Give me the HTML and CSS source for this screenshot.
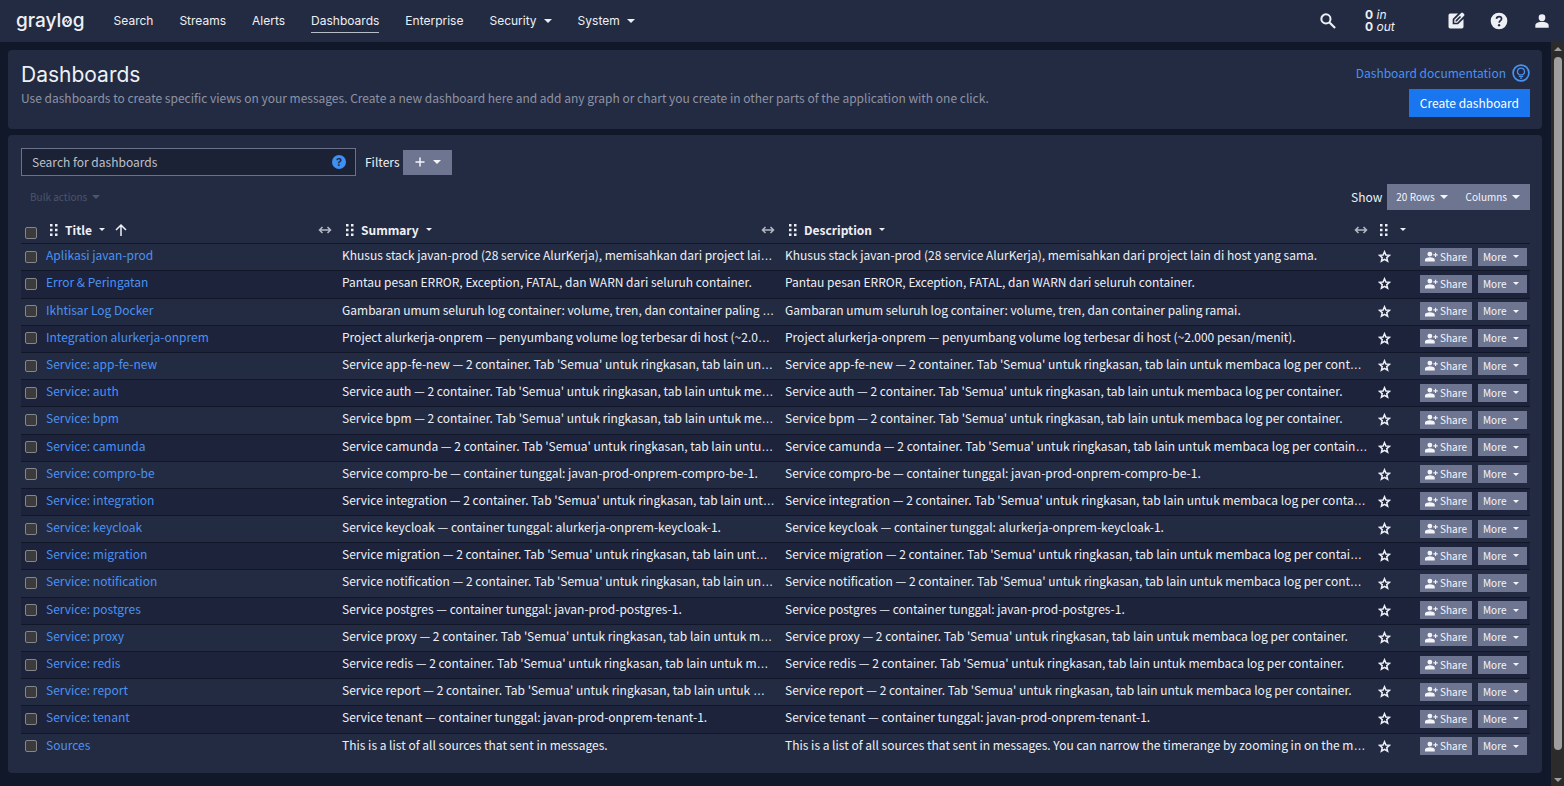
FILE: index.html
```html
<!DOCTYPE html>
<html lang="en">
<head>
<meta charset="utf-8">
<title>Dashboards</title>
<link rel="stylesheet" href="styles.css">
</head>
<body>
<svg class="sprite" aria-hidden="true">
  <symbol id="i-star" viewBox="0 0 24 24"><path d="M12 3.200l2.600 6 6.600.6-5 4.300 1.500 6.400-5.700-3.400-5.700 3.400 1.500-6.400-5-4.300 6.600-.6z" fill="none" stroke="currentColor" stroke-width="2.800"/></symbol>
  <symbol id="i-share" viewBox="0 0 24 24"><path d="M9 12a4.500 4.500 0 1 0 0-9 4.500 4.500 0 0 0 0 9zM0 21v-3.200c0-1.600 1-2.600 2.600-3.200C7 13 11 13 15.400 14.600c1.600.6 2.600 1.600 2.600 3.200V21zM18.500 5h2v3h3v2h-3v3h-2v-3h-3V8h3z" fill="currentColor"/></symbol>
  <symbol id="i-grip" viewBox="0 0 10 14"><path d="M1 1h2.500v2.500H1zM6 1h2.500v2.500H6zM1 5.700h2.500v2.500H1zM6 5.700h2.500v2.500H6zM1 10.400h2.500v2.500H1zM6 10.400h2.500v2.500H6z" fill="currentColor"/></symbol>
  <symbol id="i-resize" viewBox="0 0 14 10"><path d="M1.500 5h11M4.500 2l-3 3 3 3M9.500 2l3 3-3 3" fill="none" stroke="currentColor" stroke-width="1.500"/></symbol>
</svg>

<header class="navbar">
  <a class="logo" href="#">grayl<span class="logo-o">o<svg viewBox="0 0 12 12" aria-hidden="true"><path d="M2 7h2L5.500 4.500l1 4L8 5.500h2" fill="none" stroke="currentColor"/></svg></span>g</a>
  <nav class="nav-links">
    <a href="#">Search</a>
    <a href="#">Streams</a>
    <a href="#">Alerts</a>
    <a class="active" href="#">Dashboards</a>
    <a href="#">Enterprise</a>
    <a class="caret wide" href="#">Security</a>
    <a class="caret wide" href="#">System</a>
  </nav>
  <div class="nav-tools">
    <button class="tool" aria-label="Search"><svg viewBox="0 0 24 24"><circle cx="9.500" cy="9.500" r="5.500" fill="none" stroke="currentColor" stroke-width="2.400"/><path d="M13.500 13.500l7 7" stroke="currentColor" stroke-width="2.600"/></svg></button>
    <div class="throughput"><span><b>0</b> <i>in</i></span><span><b>0</b> <i>out</i></span></div>
    <button class="tool" aria-label="Scratchpad"><svg viewBox="0 0 24 24"><path d="M5 3h9.500L8 9.600V16h6.400L21 9.500V19a2 2 0 0 1-2 2H5a2 2 0 0 1-2-2V5a2 2 0 0 1 2-2z" fill="currentColor"/><path d="M10 14v-3.500l8.200-8.200a1.500 1.500 0 0 1 2.100 0l1.400 1.400a1.500 1.500 0 0 1 0 2.100L13.500 14z" fill="currentColor"/><path d="M11.500 12.500v-1.400l5.200-5.200 1.400 1.400-5.200 5.200z" class="cutout"/></svg></button>
    <button class="tool" aria-label="Help"><svg viewBox="0 0 24 24"><circle cx="12" cy="12" r="10" fill="currentColor"/><path d="M8.900 9.500c.2-1.800 1.500-2.800 3.200-2.800s3 1.100 3 2.600c0 2.100-2.900 2.300-2.900 4.700" class="mark"/><circle cx="12.100" cy="17" r="1.400" class="cutout"/></svg></button>
    <button class="tool" aria-label="User menu"><svg viewBox="0 0 24 24"><path d="M12 12a4 4 0 1 0 0-8 4 4 0 0 0 0 8zM4 20v-2.800c0-1.600 1-2.600 2.400-3.200 3.600-1.300 7.600-1.300 11.200 0 1.400.6 2.400 1.600 2.400 3.200V20z" fill="currentColor"/></svg></button>
  </div>
</header>

<div class="viewport">
<main class="content">
  <section class="card page-head">
    <div>
      <h1>Dashboards</h1>
      <p>Use dashboards to create specific views on your messages. Create a new dashboard here and add any graph or chart you create in other parts of the application with one click.</p>
    </div>
    <div class="head-actions">
      <a class="doc-link" href="#">Dashboard documentation <svg viewBox="0 0 18 18" aria-hidden="true"><circle cx="9" cy="9" r="7.900" fill="none" stroke="currentColor" stroke-width="1.700"/><path d="M7.200 10.800C4 8.500 5.500 4.200 9 4.200s5 4.300 1.800 6.600zM6.800 12.500h4.400M8 14.200h2" fill="none" stroke="currentColor" stroke-width="1.200"/></svg></a>
      <button class="primary">Create dashboard</button>
    </div>
  </section>

  <section class="card listing">
    <div class="search-row">
      <div class="search-box">
        <input type="text" placeholder="Search for dashboards" aria-label="Search for dashboards">
        <button class="search-help" aria-label="Search syntax help">?</button>
      </div>
      <label class="filters" for="filter">Filters</label>
      <button class="btn caret filter-btn" id="filter"><svg viewBox="0 0 12 12" aria-hidden="true"><path d="M6 1.500v9M1.500 6h9" stroke="currentColor" stroke-width="1.500"/></svg></button>
    </div>
    <div class="toolbar">
      <button class="bulk caret" disabled>Bulk actions</button>
      <div class="show">
        <span>Show</span>
        <div class="group"><button class="btn caret">20 Rows</button><button class="btn caret">Columns</button></div>
      </div>
    </div>

    <table class="entities">
      <colgroup><col class="c-check"><col class="c-title"><col class="c-summary"><col><col class="c-star"><col class="c-actions"></colgroup>
      <thead>
        <tr>
          <th><input type="checkbox" aria-label="Select all"></th>
          <th><div class="th"><svg class="grip"><use href="#i-grip"/></svg><button class="caret">Title</button><svg class="sort" viewBox="0 0 14 14"><path d="M7 13V2M2 7l5-5 5 5" fill="none" stroke="currentColor" stroke-width="1.500"/></svg><svg class="resize"><use href="#i-resize"/></svg></div></th>
          <th><div class="th"><svg class="grip"><use href="#i-grip"/></svg><button class="caret">Summary</button><svg class="resize"><use href="#i-resize"/></svg></div></th>
          <th><div class="th"><svg class="grip"><use href="#i-grip"/></svg><button class="caret">Description</button><svg class="resize"><use href="#i-resize"/></svg></div></th>
          <th><div class="th slim"><svg class="grip"><use href="#i-grip"/></svg><button class="caret" aria-label="Favorite"></button></div></th>
          <th></th>
        </tr>
      </thead>
      <tbody>
        <tr><td><input type="checkbox" aria-label="Select"></td><td><a href="#">Aplikasi javan-prod</a></td><td><span>Khusus stack javan-prod (28 service AlurKerja), memisahkan dari project lain di host yang sama.</span></td><td><span>Khusus stack javan-prod (28 service AlurKerja), memisahkan dari project lain di host yang sama.</span></td><td><button class="star" aria-label="Favorite"><svg><use href="#i-star"/></svg></button></td><td><div class="actions"><button class="btn"><svg><use href="#i-share"/></svg>Share</button><button class="btn caret">More</button></div></td></tr>
        <tr><td><input type="checkbox" aria-label="Select"></td><td><a href="#">Error &amp; Peringatan</a></td><td><span>Pantau pesan ERROR, Exception, FATAL, dan WARN dari seluruh container.</span></td><td><span>Pantau pesan ERROR, Exception, FATAL, dan WARN dari seluruh container.</span></td><td><button class="star" aria-label="Favorite"><svg><use href="#i-star"/></svg></button></td><td><div class="actions"><button class="btn"><svg><use href="#i-share"/></svg>Share</button><button class="btn caret">More</button></div></td></tr>
        <tr><td><input type="checkbox" aria-label="Select"></td><td><a href="#">Ikhtisar Log Docker</a></td><td><span>Gambaran umum seluruh log container: volume, tren, dan container paling ramai.</span></td><td><span>Gambaran umum seluruh log container: volume, tren, dan container paling ramai.</span></td><td><button class="star" aria-label="Favorite"><svg><use href="#i-star"/></svg></button></td><td><div class="actions"><button class="btn"><svg><use href="#i-share"/></svg>Share</button><button class="btn caret">More</button></div></td></tr>
        <tr><td><input type="checkbox" aria-label="Select"></td><td><a href="#">Integration alurkerja-onprem</a></td><td><span>Project alurkerja-onprem — penyumbang volume log terbesar di host (~2.000 pesan/menit).</span></td><td><span>Project alurkerja-onprem — penyumbang volume log terbesar di host (~2.000 pesan/menit).</span></td><td><button class="star" aria-label="Favorite"><svg><use href="#i-star"/></svg></button></td><td><div class="actions"><button class="btn"><svg><use href="#i-share"/></svg>Share</button><button class="btn caret">More</button></div></td></tr>
        <tr><td><input type="checkbox" aria-label="Select"></td><td><a href="#">Service: app-fe-new</a></td><td><span>Service app-fe-new — 2 container. Tab 'Semua' untuk ringkasan, tab lain untuk membaca log per container.</span></td><td><span>Service app-fe-new — 2 container. Tab 'Semua' untuk ringkasan, tab lain untuk membaca log per container.</span></td><td><button class="star" aria-label="Favorite"><svg><use href="#i-star"/></svg></button></td><td><div class="actions"><button class="btn"><svg><use href="#i-share"/></svg>Share</button><button class="btn caret">More</button></div></td></tr>
        <tr><td><input type="checkbox" aria-label="Select"></td><td><a href="#">Service: auth</a></td><td><span>Service auth — 2 container. Tab 'Semua' untuk ringkasan, tab lain untuk membaca log per container.</span></td><td><span>Service auth — 2 container. Tab 'Semua' untuk ringkasan, tab lain untuk membaca log per container.</span></td><td><button class="star" aria-label="Favorite"><svg><use href="#i-star"/></svg></button></td><td><div class="actions"><button class="btn"><svg><use href="#i-share"/></svg>Share</button><button class="btn caret">More</button></div></td></tr>
        <tr><td><input type="checkbox" aria-label="Select"></td><td><a href="#">Service: bpm</a></td><td><span>Service bpm — 2 container. Tab 'Semua' untuk ringkasan, tab lain untuk membaca log per container.</span></td><td><span>Service bpm — 2 container. Tab 'Semua' untuk ringkasan, tab lain untuk membaca log per container.</span></td><td><button class="star" aria-label="Favorite"><svg><use href="#i-star"/></svg></button></td><td><div class="actions"><button class="btn"><svg><use href="#i-share"/></svg>Share</button><button class="btn caret">More</button></div></td></tr>
        <tr><td><input type="checkbox" aria-label="Select"></td><td><a href="#">Service: camunda</a></td><td><span>Service camunda — 2 container. Tab 'Semua' untuk ringkasan, tab lain untuk membaca log per container.</span></td><td><span>Service camunda — 2 container. Tab 'Semua' untuk ringkasan, tab lain untuk membaca log per container.</span></td><td><button class="star" aria-label="Favorite"><svg><use href="#i-star"/></svg></button></td><td><div class="actions"><button class="btn"><svg><use href="#i-share"/></svg>Share</button><button class="btn caret">More</button></div></td></tr>
        <tr><td><input type="checkbox" aria-label="Select"></td><td><a href="#">Service: compro-be</a></td><td><span>Service compro-be — container tunggal: javan-prod-onprem-compro-be-1.</span></td><td><span>Service compro-be — container tunggal: javan-prod-onprem-compro-be-1.</span></td><td><button class="star" aria-label="Favorite"><svg><use href="#i-star"/></svg></button></td><td><div class="actions"><button class="btn"><svg><use href="#i-share"/></svg>Share</button><button class="btn caret">More</button></div></td></tr>
        <tr><td><input type="checkbox" aria-label="Select"></td><td><a href="#">Service: integration</a></td><td><span>Service integration — 2 container. Tab 'Semua' untuk ringkasan, tab lain untuk membaca log per container.</span></td><td><span>Service integration — 2 container. Tab 'Semua' untuk ringkasan, tab lain untuk membaca log per container.</span></td><td><button class="star" aria-label="Favorite"><svg><use href="#i-star"/></svg></button></td><td><div class="actions"><button class="btn"><svg><use href="#i-share"/></svg>Share</button><button class="btn caret">More</button></div></td></tr>
        <tr><td><input type="checkbox" aria-label="Select"></td><td><a href="#">Service: keycloak</a></td><td><span>Service keycloak — container tunggal: alurkerja-onprem-keycloak-1.</span></td><td><span>Service keycloak — container tunggal: alurkerja-onprem-keycloak-1.</span></td><td><button class="star" aria-label="Favorite"><svg><use href="#i-star"/></svg></button></td><td><div class="actions"><button class="btn"><svg><use href="#i-share"/></svg>Share</button><button class="btn caret">More</button></div></td></tr>
        <tr><td><input type="checkbox" aria-label="Select"></td><td><a href="#">Service: migration</a></td><td><span>Service migration — 2 container. Tab 'Semua' untuk ringkasan, tab lain untuk membaca log per container.</span></td><td><span>Service migration — 2 container. Tab 'Semua' untuk ringkasan, tab lain untuk membaca log per container.</span></td><td><button class="star" aria-label="Favorite"><svg><use href="#i-star"/></svg></button></td><td><div class="actions"><button class="btn"><svg><use href="#i-share"/></svg>Share</button><button class="btn caret">More</button></div></td></tr>
        <tr><td><input type="checkbox" aria-label="Select"></td><td><a href="#">Service: notification</a></td><td><span>Service notification — 2 container. Tab 'Semua' untuk ringkasan, tab lain untuk membaca log per container.</span></td><td><span>Service notification — 2 container. Tab 'Semua' untuk ringkasan, tab lain untuk membaca log per container.</span></td><td><button class="star" aria-label="Favorite"><svg><use href="#i-star"/></svg></button></td><td><div class="actions"><button class="btn"><svg><use href="#i-share"/></svg>Share</button><button class="btn caret">More</button></div></td></tr>
        <tr><td><input type="checkbox" aria-label="Select"></td><td><a href="#">Service: postgres</a></td><td><span>Service postgres — container tunggal: javan-prod-postgres-1.</span></td><td><span>Service postgres — container tunggal: javan-prod-postgres-1.</span></td><td><button class="star" aria-label="Favorite"><svg><use href="#i-star"/></svg></button></td><td><div class="actions"><button class="btn"><svg><use href="#i-share"/></svg>Share</button><button class="btn caret">More</button></div></td></tr>
        <tr><td><input type="checkbox" aria-label="Select"></td><td><a href="#">Service: proxy</a></td><td><span>Service proxy — 2 container. Tab 'Semua' untuk ringkasan, tab lain untuk membaca log per container.</span></td><td><span>Service proxy — 2 container. Tab 'Semua' untuk ringkasan, tab lain untuk membaca log per container.</span></td><td><button class="star" aria-label="Favorite"><svg><use href="#i-star"/></svg></button></td><td><div class="actions"><button class="btn"><svg><use href="#i-share"/></svg>Share</button><button class="btn caret">More</button></div></td></tr>
        <tr><td><input type="checkbox" aria-label="Select"></td><td><a href="#">Service: redis</a></td><td><span>Service redis — 2 container. Tab 'Semua' untuk ringkasan, tab lain untuk membaca log per container.</span></td><td><span>Service redis — 2 container. Tab 'Semua' untuk ringkasan, tab lain untuk membaca log per container.</span></td><td><button class="star" aria-label="Favorite"><svg><use href="#i-star"/></svg></button></td><td><div class="actions"><button class="btn"><svg><use href="#i-share"/></svg>Share</button><button class="btn caret">More</button></div></td></tr>
        <tr><td><input type="checkbox" aria-label="Select"></td><td><a href="#">Service: report</a></td><td><span>Service report — 2 container. Tab 'Semua' untuk ringkasan, tab lain untuk membaca log per container.</span></td><td><span>Service report — 2 container. Tab 'Semua' untuk ringkasan, tab lain untuk membaca log per container.</span></td><td><button class="star" aria-label="Favorite"><svg><use href="#i-star"/></svg></button></td><td><div class="actions"><button class="btn"><svg><use href="#i-share"/></svg>Share</button><button class="btn caret">More</button></div></td></tr>
        <tr><td><input type="checkbox" aria-label="Select"></td><td><a href="#">Service: tenant</a></td><td><span>Service tenant — container tunggal: javan-prod-onprem-tenant-1.</span></td><td><span>Service tenant — container tunggal: javan-prod-onprem-tenant-1.</span></td><td><button class="star" aria-label="Favorite"><svg><use href="#i-star"/></svg></button></td><td><div class="actions"><button class="btn"><svg><use href="#i-share"/></svg>Share</button><button class="btn caret">More</button></div></td></tr>
        <tr><td><input type="checkbox" aria-label="Select"></td><td><a href="#">Sources</a></td><td><span>This is a list of all sources that sent in messages.</span></td><td><span>This is a list of all sources that sent in messages. You can narrow the timerange by zooming in on the message histogram.</span></td><td><button class="star" aria-label="Favorite"><svg><use href="#i-star"/></svg></button></td><td><div class="actions"><button class="btn"><svg><use href="#i-share"/></svg>Share</button><button class="btn caret">More</button></div></td></tr>
      </tbody>
    </table>
  </section>
</main>
<div class="scrollbar" aria-hidden="true"><span class="up"></span><span class="thumb"></span><span class="down"></span></div>
</div>
</body>
</html>
```

FILE: styles.css
```css
:root {
  --page: #111829;
  --card: #232b42;
  --stripe: #1d233b;
  --line: #111729;
  --text: #eef0f6;
  --muted: #8e93a5;
  --link: #4a92f2;
  --button: #6e7591;
  --body-font: "Noto Sans CJK KR", "Noto Sans", sans-serif;
  --nav-font: "Inter", sans-serif;
}
* { box-sizing: border-box; }
body {
  margin: 0;
  height: 100vh;
  display: flex;
  flex-direction: column;
  background: var(--page);
  color: var(--text);
  font: 12px/20px var(--body-font);
}
button { font: inherit; color: inherit; border: 0; padding: 0; background: none; }
a { color: inherit; text-decoration: none; }
svg { display: block; flex: none; }
.sprite { position: absolute; width: 0; height: 0; }

.caret { display: inline-flex; align-items: center; gap: 5px; }
.caret.wide { gap: 7px; }
.caret::after {
  content: "";
  flex: none;
  border: 4px solid transparent;
  border-top-color: currentColor;
  border-bottom-width: 0;
}

.navbar {
  flex: none;
  height: 42px;
  display: flex;
  align-items: center;
  padding: 0 12px 0 16px;
  background: var(--card);
  font-family: var(--nav-font);
}
.logo { font: 500 19px/24px "Inter", sans-serif; margin-right: 29px; }
.logo-o { position: relative; }
.logo-o svg { position: absolute; left: 0; bottom: 5px; width: 12px; height: 12px; }
.nav-links { display: flex; gap: 26px; }
.nav-links a { line-height: 22px; border-bottom: 1px solid transparent; }
.nav-links .active { border-color: #b9bdca; }
.nav-tools { margin-left: auto; display: flex; align-items: center; }
.tool svg { width: 20px; height: 20px; }
.tool + .tool { margin-left: 23px; }
.throughput { display: flex; flex-direction: column; width: 81px; margin-left: 27px; line-height: 12px; }
.cutout { fill: var(--card); }
.mark { fill: none; stroke: var(--card); stroke-width: 2; }

.viewport { flex: 1; display: flex; min-height: 0; }
.content { flex: 1; min-width: 0; padding: 8px 9px 14px 8px; display: flex; flex-direction: column; gap: 6px; }
.card { background: var(--card); border-radius: 4px; padding: 13px 12px 12px 13px; }

.page-head { display: flex; justify-content: space-between; gap: 16px; }
h1 { margin: 0; font: 400 21px/24px var(--nav-font); }
.page-head p { margin: 1px 0 0; color: var(--muted); }
.head-actions { display: flex; flex-direction: column; align-items: flex-end; gap: 6px; }
.doc-link { display: flex; align-items: center; gap: 6px; color: var(--link); }
.doc-link svg { width: 18px; height: 18px; }
.primary { padding: 4px 11px; background: #1a76ee; color: #fff; }

.listing { display: flex; flex-direction: column; gap: 8px; }
.search-row { display: flex; align-items: center; }
.search-box { position: relative; width: 335px; }
.search-box input {
  display: block;
  width: 100%;
  height: 28px;
  padding: 0 32px 2px 10px;
  border: 1px solid #6b718a;
  background: #1c2236;
  color: var(--text);
  font: inherit;
}
.search-box input::placeholder { color: #bcc0cb; opacity: 1; }
.search-help {
  position: absolute;
  top: 7px;
  right: 10px;
  width: 14px;
  height: 14px;
  border-radius: 50%;
  background: #3f90f5;
  color: var(--card);
  font: 700 11px/14px "Inter", sans-serif;
}
.filters { margin: 0 3px 0 9px; }
.btn { background: var(--button); color: #f4f5f9; }
.filter-btn { gap: 7px; height: 25px; padding: 0 11px; }
.filter-btn svg { width: 12px; height: 12px; }
.toolbar { display: flex; justify-content: space-between; align-items: center; font-size: 10px; }
.bulk { padding: 0 9px; color: #4d546c; }
.show { display: flex; align-items: center; gap: 5px; }
.show span { font-size: 12px; }
.group { display: flex; }
.group .btn { height: 26px; padding: 0 9px; }
.group .btn:last-child { padding-right: 10px; }

.entities { width: 100%; table-layout: fixed; border-collapse: separate; border-spacing: 0; line-height: 1.6; }
.c-check { width: 20px; }
.c-title { width: 296px; }
.c-summary { width: 443px; }
.c-star { width: 42px; }
.c-actions { width: 115px; }
.entities th, .entities td {
  padding: 3px 5px 4px;
  border-bottom: 1px solid var(--line);
  text-align: left;
  white-space: nowrap;
  overflow: hidden;
  text-overflow: ellipsis;
}
/* The cell's own font supplies a baseline ellipsis; the text inside uses the body font. */
.entities td { font-family: "Liberation Sans", sans-serif; }
.entities td > * { font-family: var(--body-font); }
.entities td > a, .entities td > span { line-height: 1; }
.entities th { padding: 2px 5px 4px; }
.entities th:first-child, .entities td:first-child { padding-left: 4px; }
.entities td:last-child { padding-right: 0; }
.entities tr:last-child td { border-color: transparent; }
.entities tbody tr:nth-child(even) { background: var(--stripe); }
.entities td a { color: var(--link); }
.entities input {
  appearance: none;
  display: block;
  width: 12px;
  height: 12px;
  margin: 0;
  border: 1px solid #85868a;
  border-radius: 2px;
  background: #3b3b3d;
}
.entities th:first-child { vertical-align: bottom; }
.th { display: flex; align-items: center; gap: 6px; padding-left: 3px; }
.th .caret { font-weight: 700; gap: 7px; }
.th.slim { padding-left: 1px; gap: 11px; }
.th .caret::after { border-width: 3px; border-bottom-width: 0; }
.grip { width: 10px; height: 14px; }
.sort { width: 14px; height: 14px; margin-left: 3px; }
.resize { width: 14px; height: 10px; margin-left: auto; color: #b4b8c5; }
.star { display: block; }
.star svg { width: 13px; height: 13px; }
.actions { display: flex; gap: 6px; }
.actions .btn { display: flex; align-items: center; height: 18px; padding: 0 5px; font-size: 10px; line-height: 18px; }
.actions .btn svg { width: 13px; height: 13px; margin-right: 2px; }
.actions .caret { gap: 7px; padding-right: 8px; }
.actions .caret::after { border-width: 3px; border-bottom-width: 0; }

.scrollbar { flex: none; width: 13px; display: flex; flex-direction: column; align-items: center; gap: 6px; padding: 5px 0 4px; background: #2b2b2b; }
.up, .down { border: 4px solid transparent; }
.up { border-top-width: 0; border-bottom-color: #9f9f9f; }
.down { border-bottom-width: 0; border-top-color: #9f9f9f; }
.thumb { flex: 1; width: 8px; margin-bottom: 22px; border-radius: 4px; background: #9f9f9f; }
```
